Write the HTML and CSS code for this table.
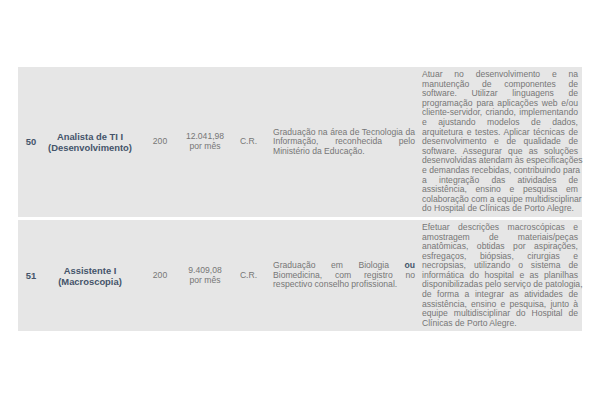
FILE: index.html
```html
<!DOCTYPE html>
<html lang="pt">
<head>
<meta charset="utf-8">
<link rel="stylesheet" href="styles.css">
</head>
<body>
<table class="vagas">
  <colgroup>
    <col class="c-num"><col class="c-cargo"><col class="c-vagas"><col class="c-sal"><col class="c-cr"><col class="c-req"><col class="c-desc">
  </colgroup>
  <tr>
    <td class="num">50</td>
    <td class="cargo">Analista de TI I<br>(Desenvolvimento)</td>
    <td class="mid">200</td>
    <td class="mid">12.041,98<br>por mês</td>
    <td class="mid">C.R.</td>
    <td class="req">
      <span class="ln">Graduação na área de Tecnologia da</span>
      <span class="ln">Informação, reconhecida pelo</span>
      <span class="ln last">Ministério da Educação.</span>
    </td>
    <td class="desc">
      <span class="ln">Atuar no desenvolvimento e na</span>
      <span class="ln">manutenção de componentes de</span>
      <span class="ln">software. Utilizar linguagens de</span>
      <span class="ln">programação para aplicações web e/ou</span>
      <span class="ln">cliente-servidor, criando, implementando</span>
      <span class="ln">e ajustando modelos de dados,</span>
      <span class="ln">arquitetura e testes. Aplicar técnicas de</span>
      <span class="ln">desenvolvimento e de qualidade de</span>
      <span class="ln">software. Assegurar que as soluções</span>
      <span class="ln">desenvolvidas atendam às especificações</span>
      <span class="ln">e demandas recebidas, contribuindo para</span>
      <span class="ln">a integração das atividades de</span>
      <span class="ln">assistência, ensino e pesquisa em</span>
      <span class="ln">colaboração com a equipe multidisciplinar</span>
      <span class="ln last">do Hospital de Clínicas de Porto Alegre.</span>
    </td>
  </tr>
  <tr>
    <td class="num">51</td>
    <td class="cargo">Assistente I<br>(Macroscopia)</td>
    <td class="mid">200</td>
    <td class="mid">9.409,08<br>por mês</td>
    <td class="mid">C.R.</td>
    <td class="req">
      <span class="ln">Graduação em Biologia <b>ou</b></span>
      <span class="ln">Biomedicina, com registro no</span>
      <span class="ln last">respectivo conselho profissional.</span>
    </td>
    <td class="desc">
      <span class="ln">Efetuar descrições macroscópicas e</span>
      <span class="ln">amostragem de materiais/peças</span>
      <span class="ln">anatômicas, obtidas por aspirações,</span>
      <span class="ln">esfregaços, biópsias, cirurgias e</span>
      <span class="ln">necropsias, utilizando o sistema de</span>
      <span class="ln">informática do hospital e as planilhas</span>
      <span class="ln">disponibilizadas pelo serviço de patologia,</span>
      <span class="ln">de forma a integrar as atividades de</span>
      <span class="ln">assistência, ensino e pesquisa, junto à</span>
      <span class="ln">equipe multidisciplinar do Hospital de</span>
      <span class="ln last">Clínicas de Porto Alegre.</span>
    </td>
  </tr>
</table>
</body>
</html>
```
FILE: styles.css
```css
html, body {
  margin: 0;
  padding: 0;
  background: #ffffff;
}
body {
  font-family: "Liberation Sans", Arial, sans-serif;
  color: #767676;
}
.vagas {
  margin: 64px 0 0 18px;
  width: 564px;
  table-layout: fixed;
  border-collapse: separate;
  border-spacing: 0 3px;
}
.c-num { width: 26px; }
.c-cargo { width: 92px; }
.c-vagas { width: 48px; }
.c-sal { width: 42px; }
.c-cr { width: 45px; }
.c-req { width: 148px; }
.c-desc { width: 163px; }
.vagas td {
  background: #e6e6e6;
  vertical-align: middle;
  padding: 3px 0;
  font-size: 8.6px;
  line-height: 9.6px;
}
.vagas td.num {
  font-weight: bold;
  font-size: 9.4px;
  color: #44546a;
  text-align: center;
}
.vagas td.cargo {
  font-weight: bold;
  font-size: 9.4px;
  line-height: 11px;
  color: #44546a;
  text-align: center;
}
.vagas td.mid {
  text-align: center;
}
.vagas td.req {
  padding: 3px 4px 3px 2px;
}
.vagas td.desc {
  padding: 3px 4px 3px 3px;
}
.ln {
  display: block;
  text-align: justify;
  text-align-last: justify;
  white-space: nowrap;
}
.ln.last {
  text-align-last: left;
}
.ln b {
  color: #44546a;
}
```
